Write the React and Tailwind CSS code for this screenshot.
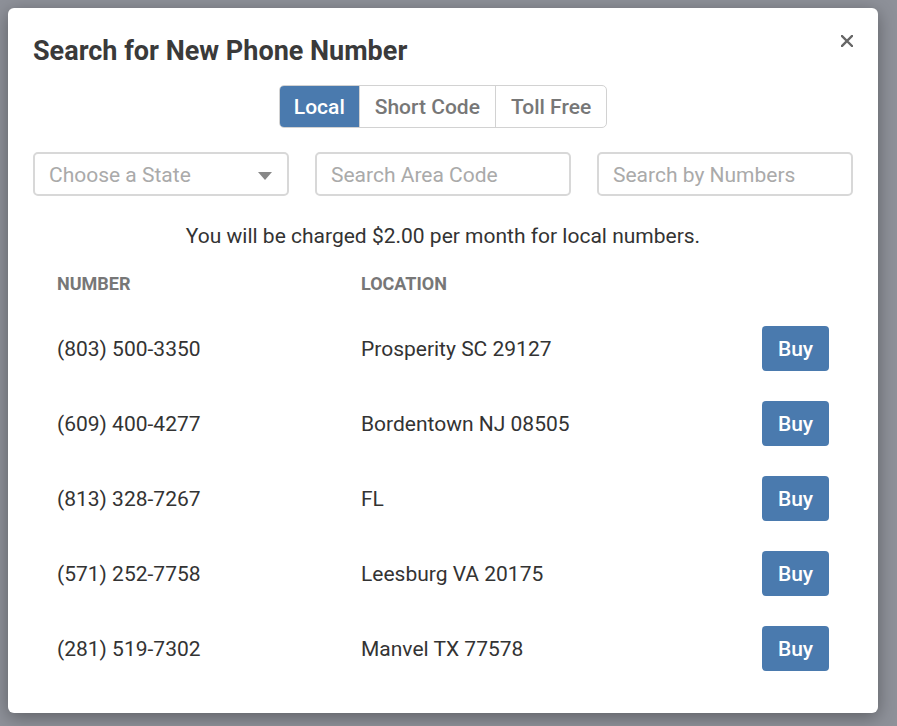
import { useState } from 'react';

const rows = [
  { number: '(803) 500-3350', location: 'Prosperity SC 29127' },
  { number: '(609) 400-4277', location: 'Bordentown NJ 08505' },
  { number: '(813) 328-7267', location: 'FL' },
  { number: '(571) 252-7758', location: 'Leesburg VA 20175' },
  { number: '(281) 519-7302', location: 'Manvel TX 77578' },
];

const tabs = ['Local', 'Short Code', 'Toll Free'];

export default function App() {
  const [tab, setTab] = useState('Local');

  return (
    <div className="min-h-screen bg-[#8e9199] p-2 font-['Roboto',sans-serif]">
      <div className="relative w-[870px] h-[705px] rounded-md bg-white px-[25px] shadow-[0_4px_18px_rgba(0,0,0,0.35)]">
        {/* Close */}
        <button type="button" className="absolute right-[21px] top-[23px] p-1 text-[#666]">
          <svg width="12" height="12" viewBox="0 0 12 12">
            <path d="M1 1 L11 11 M11 1 L1 11" stroke="currentColor" strokeWidth="2.4" strokeLinecap="square" />
          </svg>
        </button>

        {/* Header */}
        <h2 className="pt-[27px] text-[27px] leading-[32px] font-bold text-[#3a3a3a]">
          Search for New Phone Number
        </h2>

        {/* Tabs */}
        <div className="mt-[18px] flex justify-center">
          <div className="flex h-[43px] rounded-[5px] border border-[#d2d2d2] overflow-hidden">
            {tabs.map((t, i) => (
              <button
                key={t}
                type="button"
                onClick={() => setTab(t)}
                className={
                  tab === t
                    ? 'px-[14px] pt-[2px] text-[21px] font-medium bg-[#4a7aae] text-white'
                    : 'px-[15px] pt-[2px] text-[21px] font-medium text-[#777] ' + (i > 0 ? 'border-l border-[#d2d2d2]' : '')
                }
              >
                {t}
              </button>
            ))}
          </div>
        </div>

        {/* Filters */}
        <div className="mt-[24px] grid grid-cols-3 gap-[26px]">
          <div className="relative flex h-[44px] items-center rounded-[5px] border-2 border-[#d8d8d8] px-[14px] pt-[3px]">
            <span className="text-[21px] text-[#aaa]">Choose a State</span>
            <svg className="absolute right-[15px] top-[18px]" width="14" height="8" viewBox="0 0 14 8">
              <path d="M0 0 L14 0 L7 8 Z" fill="#888" />
            </svg>
          </div>
          <input
            placeholder="Search Area Code"
            className="h-[44px] rounded-[5px] border-2 border-[#d8d8d8] px-[14px] pt-[2px] text-[21px] outline-none placeholder:text-[#aaa]"
          />
          <input
            placeholder="Search by Numbers"
            className="h-[44px] rounded-[5px] border-2 border-[#d8d8d8] px-[14px] pt-[2px] text-[21px] outline-none placeholder:text-[#aaa]"
          />
        </div>

        <p className="mt-[27px] text-center text-[21px] leading-[26px] text-[#333]">
          You will be charged $2.00 per month for local numbers.
        </p>

        {/* Table */}
        <div className="mt-[10px]">
          <div className="flex h-[48px] items-center text-[18px] font-bold text-[#777]">
            <div className="w-[304px] px-[24px]">NUMBER</div>
            <div className="px-[24px]">LOCATION</div>
          </div>
          <div className="mt-[4px]">
            {rows.map((r) => (
              <div key={r.number} className="flex h-[75px] items-center text-[21px] text-[#333]">
                <div className="w-[304px] px-[24px] pt-[2px]">{r.number}</div>
                <div className="flex-1 px-[24px] pt-[2px]">{r.location}</div>
                <div className="px-[24px]">
                  <button
                    type="button"
                    className="h-[45px] w-[67px] rounded-[4px] bg-[#4a7aae] pt-[2px] text-[21px] font-medium text-white"
                  >
                    Buy
                  </button>
                </div>
              </div>
            ))}
          </div>
        </div>
      </div>
    </div>
  );
}
